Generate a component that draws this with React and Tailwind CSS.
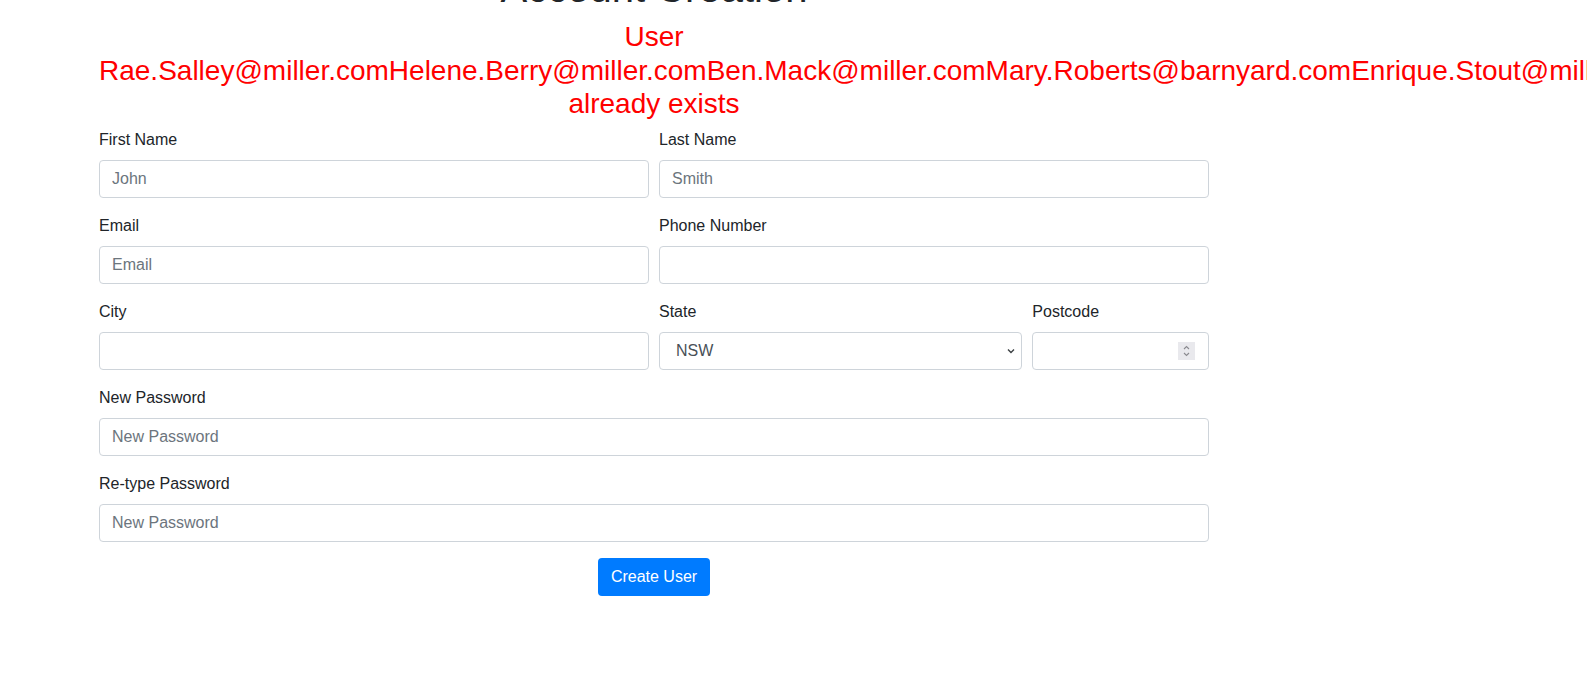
import React from 'react';

const Field = ({ label, placeholder = '', type = 'text', className = '' }) => (
  <div className={`px-[5px] mb-4 ${className}`}>
    <label className="block mb-2 leading-6">{label}</label>
    <input
      type={type}
      placeholder={placeholder}
      className="block w-full h-[38px] px-3 border border-[#ced4da] rounded bg-white text-[#495057] placeholder:text-[#6c757d] outline-none"
    />
  </div>
);

const App = () => {
  return (
    <div
      className="min-h-screen w-full overflow-hidden bg-white text-[#212529] text-base"
      style={{ fontFamily: '"Liberation Sans", Arial, sans-serif' }}
    >
      <div className="ml-[99px] w-[1110px]">
        {/* Heading, scrolled mostly out of view */}
        <h1 className="mt-[-36px] text-center text-[40px] leading-[1.2] font-medium">
          Account Creation
        </h1>

        {/* Error message */}
        <div className="mt-[8px] text-center text-[28px] leading-[1.2] text-[#ff0000]">
          User Rae.Salley@miller.comHelene.Berry@miller.comBen.Mack@miller.comMary.Roberts@barnyard.comEnrique.Stout@miller.com already exists
        </div>

        <form className="mt-[7px]">
          <div className="flex -mx-[5px]">
            <Field label="First Name" placeholder="John" className="w-1/2" />
            <Field label="Last Name" placeholder="Smith" className="w-1/2" />
          </div>
          <div className="flex -mx-[5px]">
            <Field label="Email" placeholder="Email" type="email" className="w-1/2" />
            <Field label="Phone Number" className="w-1/2" />
          </div>
          <div className="flex -mx-[5px]">
            <Field label="City" className="w-1/2" />
            <div className="px-[5px] mb-4 w-1/3">
              <label className="block mb-2 leading-6">State</label>
              <div className="flex items-center h-[38px] pl-4 pr-[5px] border border-[#ced4da] rounded bg-white text-[#495057]">
                <span className="flex-1">NSW</span>
                <svg width="10" height="10" viewBox="0 0 10 10" fill="none" stroke="#3c4043" strokeWidth="1.4">
                  <path d="M2 3.5 L5 6.5 L8 3.5" />
                </svg>
              </div>
            </div>
            <div className="px-[5px] mb-4 w-1/6">
              <label className="block mb-2 leading-6">Postcode</label>
              <div className="flex items-center h-[38px] pl-3 pr-[13px] border border-[#ced4da] rounded bg-white">
                <input type="text" className="flex-1 min-w-0 outline-none" />
                <div className="flex flex-col items-center justify-center w-[17px] h-[18px] bg-[#e9e9ed]">
                  <svg width="9" height="14" viewBox="0 0 9 14" fill="none" stroke="#8a8a8f" strokeWidth="1.1">
                    <path d="M2 5 L4.5 2.5 L7 5" />
                    <path d="M2 9 L4.5 11.5 L7 9" />
                  </svg>
                </div>
              </div>
            </div>
          </div>
          <div className="flex -mx-[5px]">
            <Field label="New Password" placeholder="New Password" type="password" className="w-full" />
          </div>
          <div className="flex -mx-[5px]">
            <Field label="Re-type Password" placeholder="New Password" type="password" className="w-full" />
          </div>
          <div className="flex justify-center">
            <button
              type="button"
              className="h-[38px] px-[13px] rounded bg-[#007bff] text-white leading-6"
            >
              Create User
            </button>
          </div>
        </form>
      </div>
    </div>
  );
};

export default App;
